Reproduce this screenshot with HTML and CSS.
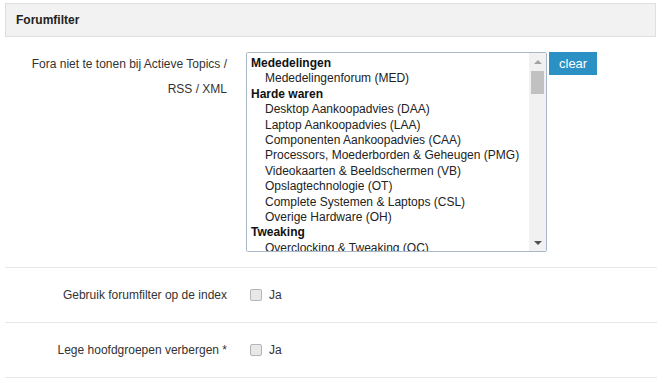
FILE: index.html
```html
<!DOCTYPE html>
<html lang="nl">
<head>
    <meta charset="UTF-8">
    <meta name="viewport" content="width=device-width, initial-scale=1.0">
    <title>Forumfilter</title>
    <link rel="stylesheet" href="styles.css">
</head>
<body>
    <div class="settings">
        <div class="section-title">Forumfilter</div>

        <div class="row">
            <label class="label" for="fora">Fora niet te tonen bij Actieve Topics / RSS / XML</label>
            <div class="field">
                <div class="listbox">
                    <select id="fora" class="fora" multiple size="13">
                        <optgroup label="Mededelingen">
                            <option>Mededelingenforum (MED)</option>
                        </optgroup>
                        <optgroup label="Harde waren">
                            <option>Desktop Aankoopadvies (DAA)</option>
                            <option>Laptop Aankoopadvies (LAA)</option>
                            <option>Componenten Aankoopadvies (CAA)</option>
                            <option>Processors, Moederborden &amp; Geheugen (PMG)</option>
                            <option>Videokaarten &amp; Beeldschermen (VB)</option>
                            <option>Opslagtechnologie (OT)</option>
                            <option>Complete Systemen &amp; Laptops (CSL)</option>
                            <option>Overige Hardware (OH)</option>
                        </optgroup>
                        <optgroup label="Tweaking">
                            <option>Overclocking &amp; Tweaking (OC)</option>
                            <option>Casemodding &amp; Cooling (CM)</option>
                            <option>Elektronica (EL)</option>
                            <option>Doe-het-zelf (DHZ)</option>
                        </optgroup>
                        <optgroup label="Consumentenelektronica">
                            <option>Beeld &amp; Geluid (BG)</option>
                            <option>Smartphones (SM)</option>
                            <option>Mobiele Netwerken (MN)</option>
                            <option>Tablets (TAB)</option>
                            <option>Fotografie &amp; Video (FV)</option>
                            <option>Wearables (WEA)</option>
                            <option>Huishoudelijke Apparaten (HA)</option>
                            <option>Domotica (DOM)</option>
                        </optgroup>
                        <optgroup label="Netwerken &amp; Telecom">
                            <option>Netwerken (NT)</option>
                            <option>Internet Service Providers (ISP)</option>
                            <option>Telecom (TEL)</option>
                            <option>Server &amp; Storage (SRV)</option>
                        </optgroup>
                        <optgroup label="Software">
                            <option>Windows Clients (WC)</option>
                            <option>Linux &amp; BSD (LB)</option>
                            <option>Apple (AP)</option>
                            <option>Software Algemeen (SA)</option>
                            <option>Beveiliging &amp; Virussen (BV)</option>
                            <option>Server Software (SS)</option>
                            <option>Android (AND)</option>
                        </optgroup>
                        <optgroup label="Developers">
                            <option>Programming (PRG)</option>
                            <option>Webdesign &amp; Graphics (WG)</option>
                            <option>Scripting (SCR)</option>
                            <option>Databases (DB)</option>
                        </optgroup>
                        <optgroup label="Gaming">
                            <option>Games Algemeen (GA)</option>
                            <option>PC Games (PCG)</option>
                            <option>Consoles (CON)</option>
                            <option>Retro Gaming (RG)</option>
                            <option>Gaming Hardware (GH)</option>
                        </optgroup>
                        <optgroup label="Tweakers.net">
                            <option>Frontpage Feedback (FF)</option>
                            <option>Pricewatch Feedback (PWF)</option>
                            <option>Forum Feedback (FB)</option>
                            <option>Meuktracker Feedback (MTF)</option>
                        </optgroup>
                        <optgroup label="Off-topic">
                            <option>De Kantine (DK)</option>
                            <option>Wetenschap &amp; Maatschappij (W&amp;M)</option>
                            <option>Werk, Studie &amp; Loopbaan (WSL)</option>
                            <option>Auto's &amp; Vervoer (AV)</option>
                            <option>Wonen &amp; Mobiliteit (WM)</option>
                            <option>Financi&euml;n &amp; Recht (FR)</option>
                            <option>Sport &amp; Hobby (SH)</option>
                            <option>Muziek &amp; Film (MF)</option>
                            <option>Lifestyle (LS)</option>
                            <option>Reizen (RZ)</option>
                        </optgroup>
                        <optgroup label="Vraag &amp; Aanbod">
                            <option>Vraag &amp; Aanbod Hardware (VAH)</option>
                            <option>Vraag &amp; Aanbod Overig (VAO)</option>
                            <option>Vraag &amp; Aanbod Software (VAS)</option>
                            <option>Vraag &amp; Aanbod Feedback (VAF)</option>
                        </optgroup>
                        <optgroup label="Archief">
                            <option>Archief Hardware (AH)</option>
                            <option>Archief Software (AS)</option>
                            <option>Archief Overig (AO)</option>
                            <option>Archief Moderatie (AM)</option>
                            <option>Archief Events (AE)</option>
                        </optgroup>
                    </select>
                    <!-- drawn scrollbar, the headless browser hides the native one -->
                    <div class="scrollbar">
                        <span class="arrow arrow-up"></span>
                        <span class="track"><span class="thumb"></span></span>
                        <span class="arrow arrow-down"></span>
                    </div>
                </div>
                <button class="clear" type="button">clear</button>
            </div>
        </div>

        <div class="row row-inline">
            <label class="label" for="index-filter">Gebruik forumfilter op de index</label>
            <div class="field">
                <label class="check"><input type="checkbox" id="index-filter"> Ja</label>
            </div>
        </div>

        <div class="row row-inline">
            <label class="label" for="hide-empty">Lege hoofdgroepen verbergen *</label>
            <div class="field">
                <label class="check"><input type="checkbox" id="hide-empty"> Ja</label>
            </div>
        </div>
    </div>

    <script>
        document.querySelector('.clear').addEventListener('click', function() {
            let options = document.querySelectorAll('#fora option');
            options.forEach((option) => {
                option.selected = false;
            });
        });
    </script>
</body>
</html>
```

FILE: styles.css
```css
body {
    margin: 0;
    background: #ffffff;
    font-family: 'Liberation Sans', Arial, sans-serif;
    font-size: 12px;
    color: #333333;
}
.settings {
    margin: 3px 0 0 5px;
}
.section-title {
    height: 32px;
    line-height: 32px;
    padding: 0 10px;
    margin-right: 1px;
    background: #f2f2f2;
    border: 1px solid #dfdfdf;
    font-weight: bold;
    color: #222222;
}
.row {
    display: flex;
    padding: 15px 0 15px;
    border-bottom: 1px solid #e6e6e6;
}
.row-inline {
    align-items: center;
    height: 24px;
}
.label {
    width: 222px;
    padding-right: 19px;
    text-align: right;
    line-height: 25px;
    color: #333333;
}
.row:first-of-type .label {
    margin-top: -1px;
}
.field {
    display: flex;
    align-items: flex-start;
    gap: 2px;
}
.listbox {
    position: relative;
    width: 301px;
    height: 200px;
}
.fora {
    width: 301px;
    height: 200px;
    margin: 0;
    padding: 3px 0 0;
    border: 1px solid #a9b8c9;
    font-family: 'Liberation Sans', Arial, sans-serif;
    font-size: 12px;
    color: #222222;
    outline: none;
}
.fora optgroup {
    font-weight: bold;
    color: #111111;
    padding-left: 2px;
}
.fora option {
    font-weight: normal;
    color: #222222;
    padding: 0 0 1px 16px;
    line-height: 14.4px;
}
.scrollbar {
    position: absolute;
    top: 1px;
    right: 1px;
    bottom: 1px;
    width: 17px;
    background: #f1f1f1;
    display: flex;
    flex-direction: column;
}
.arrow {
    height: 17px;
    display: flex;
    justify-content: center;
    align-items: center;
}
.arrow::before {
    content: '';
    border-left: 4px solid transparent;
    border-right: 4px solid transparent;
}
.arrow-up::before {
    border-bottom: 4px solid #a3a3a3;
}
.arrow-down::before {
    border-top: 4px solid #505050;
}
.track {
    flex-grow: 1;
    padding: 1px 2px 0;
}
.thumb {
    display: block;
    height: 23px;
    background: #c1c1c1;
}
.clear {
    height: 23px;
    padding: 0 10px;
    border: none;
    border-radius: 0;
    background: #2b91c5;
    color: white;
    font-family: 'Liberation Sans', Arial, sans-serif;
    font-size: 13px;
    cursor: pointer;
}
.check {
    display: flex;
    align-items: center;
    gap: 7px;
    color: #333333;
}
.check input {
    appearance: none;
    width: 12px;
    height: 12px;
    margin: 0 0 0 4px;
    border: 1px solid #b5b5b5;
    border-radius: 2px;
    background: #e8e8e8;
}
```
